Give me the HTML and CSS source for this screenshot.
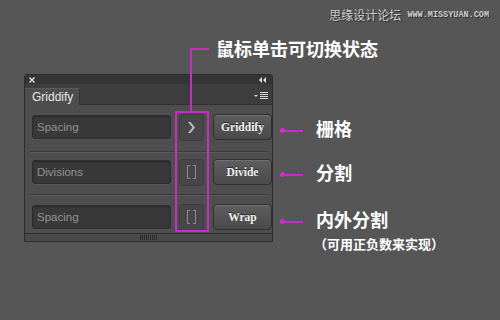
FILE: index.html
```html
<!DOCTYPE html>
<html lang="zh">
<head>
<meta charset="utf-8">
<title>Griddify</title>
<link rel="stylesheet" href="styles.css">
</head>
<body>
<div class="stage">
  <div class="watermark"><span class="wm-cn">思缘设计论坛</span><span class="wm-url">WWW.MISSYUAN.COM</span></div>
  <div class="canvas">
    <section class="panel">
      <div class="titlebar">
        <svg class="ico-close" width="6" height="6" viewBox="0 0 6 6"><path d="M0.5 0.5L5.5 5.5M5.5 0.5L0.5 5.5" stroke="#e2e2e2" stroke-width="1.4"/></svg>
        <svg class="ico-collapse" width="7" height="6" viewBox="0 0 7 6"><polygon points="3,0 0,3 3,6" fill="#dcdcdc"/><polygon points="7,0 4,3 7,6" fill="#dcdcdc"/></svg>
      </div>
      <div class="tabstrip">
        <div class="tab">Griddify</div>
        <svg class="ico-menu" width="14" height="8" viewBox="0 0 14 8"><polygon points="0,3 4,3 2,5" fill="#d8d8d8"/><path d="M6 0.5H14M6 2.5H14M6 4.5H14M6 6.5H14" stroke="#d8d8d8" stroke-width="1"/></svg>
      </div>
      <div class="rows">
        <div class="row row-1">
          <div class="field">Spacing</div>
          <div class="toggle"><svg width="7" height="11" viewBox="0 0 7 11"><polygon points="0,0 2.5,0 7,5.5 2.5,11 0,11 4.5,5.5" fill="#c0c0c0"/></svg></div>
          <div class="btn">Griddify</div>
        </div>
        <div class="sep"></div>
        <div class="row row-2">
          <div class="field">Divisions</div>
          <div class="toggle"><svg width="11" height="14" viewBox="0 0 11 14"><path d="M1.5 0.5V13.5M9.5 0.5V13.5M1.5 0.5H4M1.5 13.5H4M9.5 0.5H7M9.5 13.5H7" stroke="#8e8e8e" stroke-width="1" fill="none"/></svg></div>
          <div class="btn">Divide</div>
        </div>
        <div class="sep"></div>
        <div class="row row-3">
          <div class="field">Spacing</div>
          <div class="toggle"><svg width="11" height="14" viewBox="0 0 11 14"><path d="M1.5 0.5V13.5M9.5 0.5V13.5M1.5 0.5H4M1.5 13.5H4M9.5 0.5H7M9.5 13.5H7" stroke="#8e8e8e" stroke-width="1" fill="none"/></svg></div>
          <div class="btn">Wrap</div>
        </div>
      </div>
      <div class="footer"><div class="grip"></div></div>
    </section>
    <ul class="notes">
      <li class="note note-1"><span class="marker"><i class="dot"></i><i class="line"></i></span><span class="note-text">栅格</span></li>
      <li class="note note-2"><span class="marker"><i class="dot"></i><i class="line"></i></span><span class="note-text">分割</span></li>
      <li class="note note-3"><span class="marker"><i class="dot"></i><i class="line"></i></span><span class="note-text">内外分割</span></li>
      <li class="subnote">（可用正负数来实现）</li>
    </ul>
  </div>
  <div class="callout-line"></div>
  <div class="callout-text">鼠标单击可切换状态</div>
  <div class="frame"></div>
</div>
</body>
</html>
```
FILE: styles.css
```css
* { box-sizing: border-box; margin: 0; padding: 0; }
html, body { width: 500px; height: 320px; }
body {
  background: #565656;
  font-family: "Liberation Sans", Arial, sans-serif;
  overflow: hidden;
}
.stage { position: relative; width: 500px; height: 320px; padding: 9px 11px 0 0; }

.watermark { display: flex; justify-content: flex-end; align-items: center; gap: 6px; height: 12px; }
.wm-cn {
  font-family: "Noto Sans CJK SC", sans-serif; font-size: 12px; line-height: 12px;
  color: #cfcfcf; text-shadow: 1px 1px 0 #2e2e2e;
}
.wm-url {
  font-family: "Liberation Mono", monospace; font-weight: bold; font-size: 8.5px; line-height: 12px;
  color: #cfcfcf; text-shadow: 1px 1px 0 #2e2e2e;
}

.canvas { display: flex; align-items: flex-start; gap: 7px; margin-top: 53px; padding-left: 24px; }

.panel {
  width: 249px; height: 168px;
  border: 1px solid #2c2c2c; border-radius: 3px 3px 0 0;
  background: #4e4e4e;
  display: flex; flex-direction: column;
}
.titlebar {
  height: 9px; background: #353535;
  display: flex; justify-content: space-between; align-items: center;
  padding: 0 6px 0 4px;
  border-radius: 2px 2px 0 0;
}
.tabstrip {
  height: 21px; background: #3d3d3d;
  display: flex; justify-content: space-between; align-items: flex-end;
  padding-right: 4px;
  box-shadow: inset 0 -1px 0 #303030;
}
.tab {
  width: 55px; height: 17px;
  background: #4e4e4e; border-top: 1px solid #5a5a5a; border-right: 1px solid #333;
  color: #e8e8e8; font-size: 12px; line-height: 16px; padding-left: 7px;
}
.ico-menu { align-self: center; margin-top: 2px; }

.rows { display: flex; flex-direction: column; }
.row { display: flex; align-items: center; padding-left: 7px; height: 28px; box-sizing: content-box; }
.row-1 { padding-top: 8px; padding-bottom: 10px; }
.row-2 { padding-top: 5px; padding-bottom: 8px; }
.row-3 { padding-top: 7px; padding-bottom: 2px; }

.field {
  width: 139px; height: 24px;
  background: #393939; border: 1px solid #2d2d2d; border-radius: 3px;
  box-shadow: inset 0 1px 2px rgba(0,0,0,0.3), 0 1px 0 rgba(255,255,255,0.05);
  color: #939393; font-size: 11.5px; line-height: 22px; padding-left: 4px;
}
.toggle {
  width: 25px; height: 27px; margin-left: 8px;
  background: #474747; border: 1px solid #3d3d3d; border-radius: 3px;
  display: flex; align-items: center; justify-content: center;
}
.btn {
  width: 59px; height: 26px; margin-left: 9px;
  background: linear-gradient(#5e5e5e, #4a4a4a);
  border: 1px solid #2f2f2f; border-radius: 4px;
  box-shadow: inset 0 1px 0 rgba(255,255,255,0.12);
  color: #f2f2f2; text-shadow: 0 -1px 0 #262626;
  font-family: "Liberation Serif", "Times New Roman", serif; font-weight: bold; font-size: 11.5px;
  display: flex; align-items: center; justify-content: center;
}
.sep { height: 2px; margin: 0 5px; border-top: 1px solid #3a3a3a; border-bottom: 1px solid #5b5b5b; }

.footer {
  height: 8px; border-top: 1px solid #2f2f2f; background: #4a4a4a;
  display: flex; align-items: center; justify-content: center;
}
.grip { width: 18px; height: 5px; background: repeating-linear-gradient(to right, #2a2a2a 0 1px, transparent 1px 2px); }

.notes { list-style: none; padding-top: 42px; display: flex; flex-direction: column; }
.note { display: flex; align-items: flex-start; height: 24px; }
.note-2 { margin-top: 20px; }
.note-3 { margin-top: 23px; }
.marker { display: flex; align-items: center; height: 5px; margin-top: 12px; }
.dot { display: block; width: 5px; height: 5px; border-radius: 50%; background: #d62ad6; }
.line { display: block; width: 18px; height: 2px; background: #c42ec4; }
.note-text {
  margin-left: 13px;
  font-family: "Noto Sans CJK SC", sans-serif; font-weight: bold; font-size: 18px; line-height: 24px; color: #ffffff;
}
.subnote {
  margin-top: 4px; margin-left: 34px;
  font-family: "Noto Sans CJK SC", sans-serif; font-weight: bold; font-size: 13px; line-height: 18px; color: #ffffff;
}

.callout-line {
  position: absolute; left: 190px; top: 48px; width: 19px; height: 64px;
  border-left: 2px solid #c42ec4; border-top: 2px solid #c42ec4;
}
.callout-text {
  position: absolute; left: 216px; top: 36px;
  font-family: "Noto Sans CJK SC", sans-serif; font-weight: bold; font-size: 18px; line-height: 24px; color: #ffffff;
}
.frame {
  position: absolute; left: 175px; top: 111px; width: 34px; height: 121px;
  border: 2px solid #c42ec4;
}
```
